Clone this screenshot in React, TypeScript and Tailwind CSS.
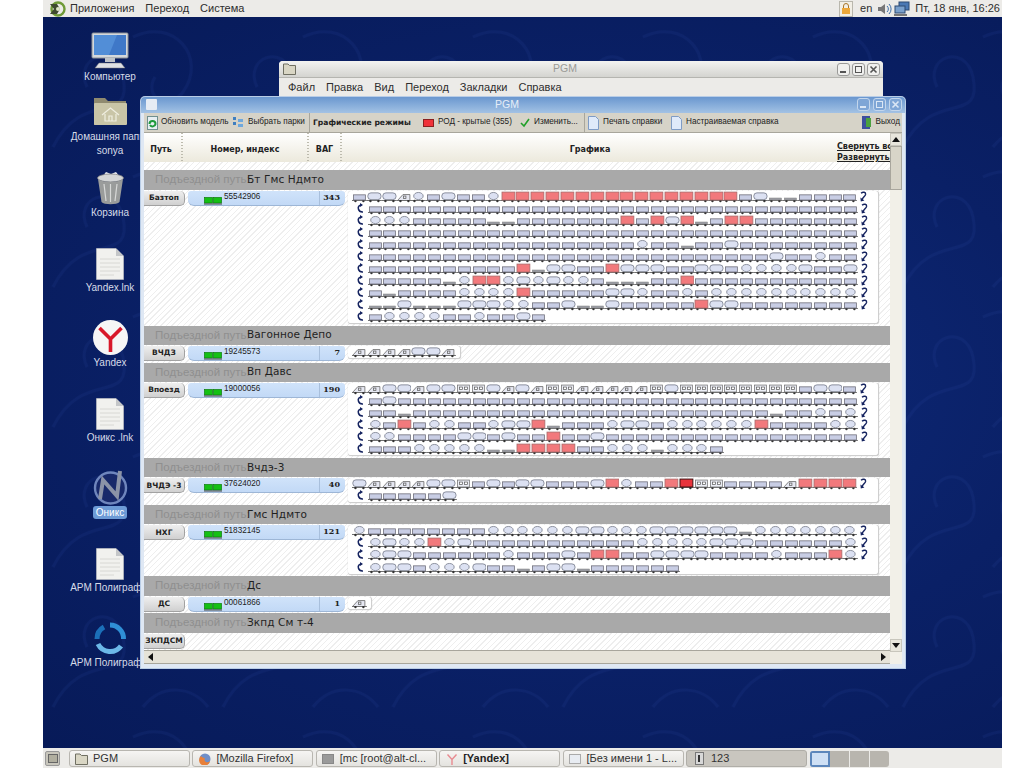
import React from "react";

const b = (n: number) => "b".repeat(n);
const c = (n: number) => "c".repeat(n);
const r = (n: number) => "r".repeat(n);

const G1 = [
  "bootcbobbc" + r(16) + "boffbbbb",
  b(33),
  "ccc" + b(5) + "ff" + b(7) + "rbrorfbrr" + b(7),
  b(33),
  b(18) + "cbbfbbo" + b(8),
  b(27) + "obbcbb",
  b(10) + "rfoobbrooobboobccccobbo",
  b(5) + "fcrrcococc" + "bfffbbr" + b(11),
  "bf" + b(4) + "ccccr" + b(5) + "oocbbcb" + c(10),
  "ffofffooocc" + "bboffo" + b(5) + "roo" + b(8),
  "bccccbbcbbob",
];
const G2 = ["ttttoot"];
const G3 = [
  "ttootoodd" + "otot" + "ddttttt" + "do" + "dddddddd" + "boob",
  "bo" + b(31),
  "bbf" + b(24) + "fbbcbc",
  "cbrbccbbcoorfbbbcoobccccccrbbbbcc",
  "ccbbbboobobbrbbo" + b(17),
  "bbbcccccffrrrrbbcccfcccb",
];
const G4 = ["ottttoodboboobbbo" + "rcbbrRddbbbbtrrrr", b(5) + "o"];
const G5 = [
  "c" + b(8) + c(6) + "ooccc" + "oooooo" + "f" + c(7),
  "cocc" + "rco" + b(11) + c(5) + "ooo" + b(6) + "c",
  "coo" + b(6) + "cbbbobrrbboooo" + b(4) + "cbbbrc",
  "coobcccobbfboofbbbbbb",
];

function Wagon({ t }: { t: string }) {
  return (
    <svg width="14.87" height="12.05" viewBox="0 0 15 12" className="shrink-0 block">
      <line x1="0" y1="9.5" x2="15" y2="9.5" stroke="#5c5c5c" strokeWidth="0.9" />
      <circle cx="3.5" cy="10" r="1.2" fill="#333" />
      <circle cx="11.5" cy="10" r="1.2" fill="#333" />
      {t === "b" && <rect x="1.5" y="3.8" width="12" height="5.2" fill="#c8cde4" stroke="#6e6e7a" strokeWidth="0.8" />}
      {t === "r" && <rect x="1" y="1" width="13" height="8" fill="#f2797c" stroke="#a86a6a" strokeWidth="0.8" />}
      {t === "R" && <rect x="1" y="1" width="13" height="8" fill="#e8343c" stroke="#3c1010" strokeWidth="1" />}
      {t === "o" && <rect x="0.8" y="1.8" width="13.4" height="6.8" rx="3.2" fill="#dce1f2" stroke="#737888" strokeWidth="0.8" />}
      {t === "c" && <ellipse cx="7.5" cy="5" rx="4.8" ry="3.6" fill="#dce1f2" stroke="#737888" strokeWidth="0.8" />}
      {t === "f" && <rect x="1.5" y="7" width="12" height="2" fill="#a0a2aa" stroke="#777" strokeWidth="0.5" />}
      {t === "t" && (
        <g fill="none" stroke="#666" strokeWidth="0.8">
          <path d="M1 9 L6 3.5 H13 V9" fill="#e6e8f2" />
          <rect x="6.5" y="5" width="2.5" height="2.5" />
        </g>
      )}
      {t === "d" && (
        <g>
          <rect x="1.5" y="2" width="12" height="7" fill="#eceef6" stroke="#777" strokeWidth="0.8" />
          <rect x="3.5" y="4" width="3" height="2.5" fill="#fff" stroke="#555" strokeWidth="0.7" />
          <rect x="8.5" y="4" width="3" height="2.5" fill="#fff" stroke="#555" strokeWidth="0.7" />
        </g>
      )}
    </svg>
  );
}

function ArrowIn() {
  return (
    <svg width="7" height="11" viewBox="0 0 7 11" className="block">
      <path d="M4.5 2 C2 2 0.8 4 1.4 6 C2 8.2 3.8 9.2 6 9" fill="none" stroke="#15235f" strokeWidth="1.5" />
      <path d="M3 0 L6 2 L3 4 Z" fill="#15235f" />
    </svg>
  );
}

function ArrowOut() {
  return (
    <svg width="7" height="11" viewBox="0 0 7 11" className="block">
      <path d="M1 2.2 C3 0.6 6 1 5.6 3.4 C5.2 5.4 2.6 6.4 2 9" fill="none" stroke="#15235f" strokeWidth="1.4" />
      <path d="M0.4 6.6 L0.8 10.6 L4.4 9.4 Z" fill="#15235f" />
    </svg>
  );
}

function Track({ rows, narrow }: { rows: string[]; narrow?: boolean }) {
  return (
    <div className={narrow ? "rounded-[3px] border-b border-r border-[#cfcfcf] bg-white pl-[4px] pr-[4px] shadow-[0_0_1px_#bbb]" : "rounded-[3px] border-b border-r border-[#cfcfcf] bg-white pl-[4px] pr-[12px] shadow-[0_0_1px_#bbb]"}>
      {rows.map((row, i) => (
        <div key={i} className="flex h-[12.05px] items-start">
          {i > 0 && (
            <div className="w-[15.5px] shrink-0 pl-[5px]">
              <ArrowIn />
            </div>
          )}
          {row.split("").map((t, j) => (
            <Wagon key={j} t={t} />
          ))}
          {i < rows.length - 1 && (
            <div className="ml-[3px] shrink-0">
              <ArrowOut />
            </div>
          )}
        </div>
      ))}
    </div>
  );
}

function Loco() {
  return (
    <svg width="18" height="8" viewBox="0 0 18 8" className="block">
      <rect x="0.5" y="0.5" width="8" height="5.5" fill="#14c014" stroke="#0b7d0b" strokeWidth="0.7" />
      <rect x="9.5" y="0.5" width="8" height="5.5" fill="#14c014" stroke="#0b7d0b" strokeWidth="0.7" />
      <line x1="0" y1="7" x2="18" y2="7" stroke="#444" strokeWidth="1" />
    </svg>
  );
}

function Group({
  name,
  label,
  num,
  count,
  rows,
  narrow,
}: {
  name: string;
  label: string;
  num?: string;
  count?: string;
  rows?: string[];
  narrow?: boolean;
}) {
  return (
    <div className="pb-[1.5px]">
      <div className="flex h-[19.5px] items-center bg-[#a9a9a9] pl-[11px]">
        <span className="w-[92px] shrink-0 whitespace-nowrap text-[11.5px] text-[#8f8f8f]">Подъездной путь:</span>
        <span className="whitespace-nowrap text-[10.5px] tracking-[0.1px] text-[#1f1f1f] [font-family:'DejaVu_Sans',sans-serif]">{name}</span>
      </div>
      <div className="flex items-start pt-[1px]">
        <div className="flex h-[15px] w-[41px] shrink-0 items-center justify-center rounded-r-[5px] border-b border-r border-[#a2a2a2] bg-gradient-to-b from-[#efefef] to-[#d0d0d0] text-[7.5px] font-bold text-[#222] [font-family:'DejaVu_Sans',sans-serif] whitespace-nowrap">
          {label}
        </div>
        {num && (
          <div className="ml-[3px] flex h-[15px] w-[157px] shrink-0 rounded-b-[6px] rounded-t-[3px] border-b border-[#9db6d6] bg-gradient-to-b from-[#d0e3fa] to-[#c2d9f6]">
            <div className="flex w-[132px] border-r border-[#a8bfdc] pl-[16px]">
              <div className="pt-[6px]">
                <Loco />
              </div>
              <span className="ml-[2px] pt-[1px] text-[8.2px] leading-[10px] text-[#222]">{num}</span>
            </div>
            <div className="flex-1 pr-[5px] pt-[1px] text-right text-[8px] font-bold leading-[11px] text-[#222] [font-family:'DejaVu_Serif',serif]">{count}</div>
          </div>
        )}
        {rows && (
          <div className={narrow ? "ml-[3px] shrink-0" : "ml-[3px] w-[531px] shrink-0"}>
            <Track rows={rows} narrow={narrow} />
          </div>
        )}
      </div>
    </div>
  );
}

function DocIcon() {
  return (
    <svg width="28" height="32" viewBox="0 0 28 32">
      <path d="M0.5 0.5 H20 L27.5 8 V31.5 H0.5 Z" fill="#f1f1ee" stroke="#c9c9c9" strokeWidth="0.6" />
      <path d="M20 0.5 V8 H27.5 Z" fill="#c4c6c8" />
      <g stroke="#d8d8d4" strokeWidth="1">
        <line x1="4" y1="11" x2="24" y2="11" />
        <line x1="4" y1="15" x2="24" y2="15" />
        <line x1="4" y1="19" x2="24" y2="19" />
        <line x1="4" y1="23" x2="24" y2="23" />
        <line x1="4" y1="27" x2="18" y2="27" />
      </g>
    </svg>
  );
}

const desktopIcons: { key: string; label: string[]; icon: React.ReactNode; lift?: boolean; sel?: boolean; short?: boolean }[] = [
  {
    key: "pc",
    label: ["Компьютер"],
    short: true,
    icon: (
      <svg width="38" height="37" viewBox="0 0 38 37">
        <rect x="1" y="1" width="36" height="25" rx="1" fill="#d4d8dc" stroke="#8b9096" />
        <rect x="3" y="3" width="32" height="20" fill="#3f78c8" />
        <path d="M3 3 H26 L18 23 H3 Z" fill="#5b97dd" opacity="0.7" />
        <rect x="14" y="26" width="10" height="4" fill="#bfc3c8" />
        <path d="M4 36 L8 31 H30 L34 36 Z" fill="#dfe1e4" stroke="#777" strokeWidth="0.5" />
      </svg>
    ),
  },
  {
    key: "home",
    label: ["Домашняя папка", "sonya"],
    lift: true,
    short: true,
    icon: (
      <svg width="33" height="30" viewBox="0 0 33 30">
        <path d="M0 2 H11 L14 5 H32 V29 H0 Z" fill="#8f8a6f" />
        <rect x="0" y="7" width="33" height="22" rx="1" fill="#c9c5a7" />
        <path d="M8 19 L16.5 12 L25 19 M11 18 V25 H22 V18 M15 25 V20 H18 V25" fill="none" stroke="#efeee0" strokeWidth="1.2" />
      </svg>
    ),
  },
  {
    key: "trash",
    label: ["Корзина"],
    icon: (
      <svg width="29" height="34" viewBox="0 0 29 34">
        <path d="M6 6 L10 1 L15 3 L20 1 L24 6 Z" fill="#eef1f4" />
        <ellipse cx="14.5" cy="7" rx="13" ry="4" fill="#d4d6d6" stroke="#777" strokeWidth="0.7" />
        <path d="M2 8 L5.5 31 C8 34 21 34 23.5 31 L27 8 C22 12 7 12 2 8 Z" fill="#9a9c9b" />
        <g stroke="#d8d9d8" strokeWidth="1.2">
          <line x1="8" y1="13" x2="10" y2="30" />
          <line x1="14.5" y1="13" x2="14.5" y2="31" />
          <line x1="21" y1="13" x2="19" y2="30" />
        </g>
      </svg>
    ),
  },
  { key: "ylnk", label: ["Yandex.lnk"], icon: <DocIcon /> },
  {
    key: "y",
    label: ["Yandex"],
    icon: (
      <svg width="35" height="35" viewBox="0 0 35 35">
        <circle cx="17.5" cy="17.5" r="17.5" fill="#f6f6f6" />
        <path d="M6.5 8 L17.5 19 L28.5 8 M17.5 19 V32" fill="none" stroke="#d8182a" strokeWidth="3.6" />
      </svg>
    ),
  },
  { key: "olnk", label: ["Оникс .lnk"], icon: <DocIcon /> },
  {
    key: "on",
    label: ["Оникс"],
    sel: true,
    icon: (
      <svg width="35" height="36" viewBox="0 0 35 36">
        <circle cx="17.5" cy="19" r="15.5" fill="#18296a" stroke="#6f86bd" strokeWidth="2.4" />
        <path d="M7 30 L10 11 L24 27 L27 2" fill="none" stroke="#8b93a7" strokeWidth="4" />
      </svg>
    ),
  },
  { key: "alnk", label: ["АРМ Полиграф..."], icon: <DocIcon /> },
  {
    key: "arm",
    label: ["АРМ Полиграф..."],
    icon: (
      <svg width="33" height="33" viewBox="0 0 33 33">
        <path d="M16 3 A13.5 13.5 0 0 1 29.5 17" fill="none" stroke="#2f8fd6" strokeWidth="5" />
        <path d="M27 24 A13.5 13.5 0 0 1 4 22" fill="none" stroke="#6cb8e8" strokeWidth="5" />
        <path d="M3 17 A13.5 13.5 0 0 1 10 5" fill="none" stroke="#1b6fb8" strokeWidth="5" />
      </svg>
    ),
  },
];

function WinBtn({ kind, blue }: { kind: "min" | "max" | "x"; blue?: boolean }) {
  const stroke = blue ? "#dbe7f5" : "#555";
  return (
    <svg width="13" height="13" viewBox="0 0 13 13" className="block">
      <rect x="0.5" y="0.5" width="12" height="12" rx="2.5" fill={blue ? "#7fa6d6" : "#f0f0ee"} stroke={blue ? "#c3d6ec" : "#9a9a98"} />
      {kind === "min" && <rect x="3" y="8" width="6" height="2" fill={stroke} />}
      {kind === "max" && <rect x="3.5" y="3.5" width="6" height="6" fill="none" stroke={stroke} />}
      {kind === "x" && <path d="M3.5 3.5 L9.5 9.5 M9.5 3.5 L3.5 9.5" stroke={stroke} strokeWidth="1.6" />}
    </svg>
  );
}

function Folder() {
  return (
    <svg width="13" height="12" viewBox="0 0 13 12" className="block shrink-0">
      <path d="M0.5 1 H5 L6.5 2.5 H12.5 V11.5 H0.5 Z" fill="#d9d6c4" stroke="#6f6f62" />
    </svg>
  );
}

function Paper() {
  return (
    <svg width="11" height="14" viewBox="0 0 11 14" className="block shrink-0">
      <path d="M0.5 0.5 H7.5 L10.5 3.5 V13.5 H0.5 Z" fill="#dfeafa" stroke="#7f9cc6" />
    </svg>
  );
}

function Dots() {
  return <div className="h-[28px] w-[2px] shrink-0 self-end bg-[repeating-linear-gradient(180deg,#bdbbae_0px,#bdbbae_1px,transparent_1px,transparent_3px)]" />;
}

function TaskBtn({ icon, text, bold, active }: { icon: React.ReactNode; text: string; bold?: boolean; active?: boolean }) {
  return (
    <div
      className={
        active
          ? "flex h-[17px] w-[121px] shrink-0 items-center gap-[5px] rounded-[3px] border border-[#b0aea8] bg-[#c9c6bf] pl-[6px]"
          : "flex h-[17px] w-[121px] shrink-0 items-center gap-[5px] rounded-[3px] border border-[#b8b6b0] bg-gradient-to-b from-[#f6f5f3] to-[#e4e3df] pl-[5px]"
      }
    >
      <div className="flex w-[13px] shrink-0 justify-center">{icon}</div>
      <span className={bold ? "whitespace-nowrap font-bold text-[#222]" : "whitespace-nowrap text-[#333]"}>{text}</span>
    </div>
  );
}

function Wallpaper() {
  return (
    <svg className="absolute inset-0 h-full w-full" aria-hidden="true">
      <defs>
        <pattern id="orn" width="170" height="140" patternUnits="userSpaceOnUse">
          <g fill="none" stroke="#2a4aa6" strokeWidth="3" opacity="0.13">
            <path d="M10 130 C40 70 90 110 80 60 C72 25 30 40 44 70" />
            <path d="M90 20 C130 0 165 40 140 75 C125 95 100 80 112 60" />
            <path d="M100 130 C120 105 150 110 165 130" />
          </g>
        </pattern>
      </defs>
      <rect width="100%" height="100%" fill="url(#orn)" />
    </svg>
  );
}

export default function App() {
  return (
    <div className="flex h-[768px] w-[1024px] overflow-hidden bg-white [font-family:'Liberation_Sans',sans-serif]">
      <div className="ml-[43px] flex w-[959px] flex-col">
        {/* top panel */}
        <div className="flex h-[17px] shrink-0 items-center bg-[#ecebe8] text-[11px] text-[#2e2e2e]">
          <svg width="18" height="16" viewBox="0 0 18 16" className="ml-[6px] block">
            <circle cx="9" cy="8" r="6.5" fill="none" stroke="#6f9a38" strokeWidth="2.4" />
            <path d="M1 3 H8 L11 8 L8 13 H1 L5 8 Z" fill="#3f4a30" />
            <circle cx="9" cy="8" r="2" fill="#dfe8c8" />
          </svg>
          <span className="ml-[3px]">Приложения</span>
          <span className="ml-[11px]">Переход</span>
          <span className="ml-[11px]">Система</span>
          <div className="flex-1" />
          <svg width="14" height="16" viewBox="0 0 14 16" className="block">
            <rect x="0.5" y="0.5" width="13" height="15" fill="#f2efe6" stroke="#b9b7ad" />
            <rect x="3" y="7" width="8" height="6" fill="#eda83a" />
            <path d="M4.5 7 V5 A2.5 2.5 0 0 1 9.5 5 V7" fill="none" stroke="#a9762a" />
          </svg>
          <span className="ml-[7px]">en</span>
          <svg width="16" height="14" viewBox="0 0 16 14" className="ml-[5px] block">
            <path d="M1 5 H4 L8 2 V12 L4 9 H1 Z" fill="#777" />
            <path d="M10 4 A4 4 0 0 1 10 10 M12 2 A7 7 0 0 1 12 12" fill="none" stroke="#3f6fa8" />
          </svg>
          <svg width="16" height="16" viewBox="0 0 16 16" className="ml-[1px] block">
            <rect x="5" y="1" width="10" height="8" fill="#4a78b4" stroke="#2d4a72" />
            <rect x="1" y="5" width="10" height="7" fill="#7aa0cc" stroke="#2d4a72" />
            <rect x="0" y="13" width="13" height="2" fill="#777" />
          </svg>
          <span className="ml-[5px] mr-[2px] whitespace-nowrap">Пт, 18 янв, 16:26</span>
        </div>

        {/* desktop */}
        <div className="relative flex-1 overflow-hidden bg-[#0a2066] bg-[radial-gradient(ellipse_at_60%_50%,#0e2b7c_0%,#0a2066_55%,#071a58_100%)]">
          <Wallpaper />
          <div className="relative flex w-[134px] flex-col">
            {desktopIcons.map((d) => (
              <div
                key={d.key}
                className={
                  d.lift
                    ? "flex h-[68px] flex-col items-center pt-[11px]"
                    : d.short
                      ? "flex h-[68px] flex-col items-center pt-[13px]"
                      : "flex h-[75px] flex-col items-center pt-[13px]"
                }
              >
                <div className={d.lift ? "flex h-[30px] items-end" : "flex h-[39px] items-end"}>{d.icon}</div>
                {d.label.map((l, i) => (
                  <div
                    key={i}
                    className={
                      d.sel
                        ? "mt-[1px] rounded-[3px] bg-[#6d9bd6] px-[3px] text-[10px] font-normal leading-[13px] text-white"
                        : i === 0 && d.lift
                          ? "mt-[4px] whitespace-nowrap text-[10px] leading-[13px] text-[#d6dbe8]"
                          : "mt-[1px] whitespace-nowrap text-[10px] leading-[13px] text-[#d6dbe8]"
                    }
                  >
                    {l}
                  </div>
                ))}
              </div>
            ))}
          </div>

          {/* back window */}
          <div className="absolute left-[236px] top-[44px] h-[300px] w-[604px] rounded-t-[4px] bg-[#ecebe8]">
            <div className="relative flex h-[17px] items-center justify-center rounded-t-[4px] border-b border-[#b5b5b0] bg-gradient-to-b from-[#f3f3f1] to-[#d4d4d0] pr-[32px]">
              <div className="absolute left-[4px] top-[2px]">
                <Folder />
              </div>
              <span className="text-[10.5px] text-[#9a9a96]">PGM</span>
              <div className="absolute right-[3px] top-[2px] flex gap-[2px]">
                <WinBtn kind="min" />
                <WinBtn kind="max" />
                <WinBtn kind="x" />
              </div>
            </div>
            <div className="flex h-[19px] items-center gap-[11px] pl-[9px] text-[11px] text-[#2e2e2e]">
              <span>Файл</span>
              <span>Правка</span>
              <span>Вид</span>
              <span>Переход</span>
              <span>Закладки</span>
              <span>Справка</span>
            </div>
          </div>

          {/* front window */}
          <div className="absolute left-[98px] top-[80px] flex h-[571px] w-[764px] flex-col overflow-hidden rounded-t-[4px] bg-[#dfe8f4] px-[3px] pb-[4px] text-[#222] shadow-[0_0_0_1px_#b9cde6]">
            <div className="relative -mx-[3px] flex h-[16px] shrink-0 items-center justify-center bg-gradient-to-b from-[#6a97cf] to-[#a3c2e4] pr-[32px]">
              <div className="absolute left-[5px] top-[2px] h-[11px] w-[11px] rounded-[1px] bg-[#e6ecf4]" />
              <span className="text-[10.5px] text-[#e6eef8]">PGM</span>
              <div className="absolute right-[3px] top-[1px] flex gap-[3px]">
                <WinBtn kind="min" blue />
                <WinBtn kind="max" blue />
                <WinBtn kind="x" blue />
              </div>
            </div>

            {/* toolbar */}
            <div className="flex h-[20px] shrink-0 items-center border-b border-[#a8a69c] bg-[#d6d3c8] text-[8.2px] text-[#222]">
              <svg width="11" height="14" viewBox="0 0 11 14" className="ml-[3px] block shrink-0">
                <rect x="0.5" y="0.5" width="10" height="13" fill="#e6eef2" stroke="#6f8f8f" />
                <path d="M2.5 8 A3 3 0 1 1 8.5 8 A3 3 0 0 1 3 9" fill="none" stroke="#1d9a3a" strokeWidth="2" />
              </svg>
              <span className="ml-[3px] w-[70px] shrink-0 whitespace-nowrap">Обновить модель</span>
              <svg width="10" height="13" viewBox="0 0 10 13" className="ml-[2px] block shrink-0">
                <rect x="0" y="1" width="3" height="3" fill="#3f7fc0" />
                <rect x="5" y="3" width="5" height="3" fill="#6fa8dc" />
                <rect x="0" y="6" width="3" height="3" fill="#3f7fc0" />
                <rect x="5" y="8" width="5" height="3" fill="#6fa8dc" />
              </svg>
              <span className="ml-[5px] w-[61px] shrink-0 whitespace-nowrap">Выбрать парки</span>
              <div className="h-[19px] w-px shrink-0 bg-[#a8a69c]" />
              <span className="ml-[3px] w-[110px] shrink-0 whitespace-nowrap font-bold [font-family:'DejaVu_Sans',sans-serif] text-[7.6px]">Графические режимы</span>
              <div className="h-[8px] w-[11px] shrink-0 border border-[#8a2020] bg-[#f0323a]" />
              <span className="ml-[4px] w-[78px] shrink-0 whitespace-nowrap">РОД - крытые (355)</span>
              <svg width="10" height="10" viewBox="0 0 10 10" className="ml-[4px] block shrink-0">
                <path d="M1 5 L4 8 L9 1" fill="none" stroke="#22a02a" strokeWidth="1.6" />
              </svg>
              <span className="ml-[4px] w-[47px] shrink-0 whitespace-nowrap">Изменить...</span>
              <div className="ml-[3px] h-[19px] w-px shrink-0 bg-[#a8a69c]" />
              <div className="ml-[3px] shrink-0">
                <Paper />
              </div>
              <span className="ml-[4px] w-[64px] shrink-0 whitespace-nowrap">Печать справки</span>
              <div className="ml-[4px] shrink-0">
                <Paper />
              </div>
              <span className="ml-[4px] whitespace-nowrap">Настраиваемая справка</span>
              <div className="flex-1" />
              <svg width="11" height="15" viewBox="0 0 11 15" className="block shrink-0">
                <rect x="1" y="1" width="8" height="13" fill="#3d4f9e" />
                <rect x="5" y="3" width="5" height="9" fill="#4aa03f" />
              </svg>
              <span className="ml-[4px] mr-[2px] whitespace-nowrap">Выход</span>
            </div>

            <div className="flex min-h-0 flex-1">
              <div className="flex w-[746px] shrink-0 flex-col">
                {/* header */}
                <div className="relative flex h-[29px] shrink-0 items-end bg-gradient-to-b from-[#ffffff] to-[#ece9dc] pb-[1px] text-[8px] font-bold [font-family:'DejaVu_Sans',sans-serif]">
                  <div className="flex w-[37px] shrink-0 items-center justify-center self-center pr-[3px] pt-[6px]">Путь</div>
                  <Dots />
                  <div className="flex w-[124px] shrink-0 items-center justify-center self-center pt-[6px]">Номер, индекс</div>
                  <Dots />
                  <div className="flex w-[31px] shrink-0 items-center justify-center self-center pt-[6px]">ВАГ</div>
                  <Dots />
                  <div className="flex w-[496px] shrink-0 items-center justify-center self-center pt-[6px]">Графика</div>
                  <div className="absolute left-[693px] top-[8px] w-[53px] overflow-hidden text-[8px] leading-[11px] underline whitespace-nowrap">
                    <div>Свернуть все</div>
                    <div>Развернуть все</div>
                  </div>
                </div>
                {/* content */}
                <div className="min-h-0 flex-1 overflow-hidden bg-[repeating-linear-gradient(135deg,#ffffff_0px,#ffffff_3px,#eeeeee_3px,#eeeeee_4px)] pt-[8px]">
                  <Group name="Бт Гмс Ндмто" label="Базтоп" num="55542906" count="343" rows={G1} />
                  <Group name="Вагонное Депо" label="ВЧДЗ" num="19245573" count="7" rows={G2} narrow />
                  <Group name="Вп Давс" label="Впоезд" num="19000056" count="190" rows={G3} />
                  <Group name="Вчдэ-3" label="ВЧДЭ -3" num="37624020" count="40" rows={G4} />
                  <Group name="Гмс Ндмто" label="НХГ" num="51832145" count="121" rows={G5} />
                  <Group name="Дс" label="ДС" num="00061866" count="1" rows={["t"]} narrow />
                  <Group name="Зкпд См т-4" label="ЗКПДСМ" />
                </div>
                {/* horizontal scroll */}
                <div className="flex h-[14px] shrink-0 items-center justify-between border-y border-[#a8a69c] bg-[#e6e3d8] px-[3px]">
                  <svg width="7" height="8" viewBox="0 0 7 8"><path d="M6 0 L1 4 L6 8 Z" fill="#111" /></svg>
                  <svg width="7" height="8" viewBox="0 0 7 8"><path d="M1 0 L6 4 L1 8 Z" fill="#111" /></svg>
                </div>
              </div>
              {/* vertical scroll */}
              <div className="flex w-[12px] shrink-0 flex-col bg-[#f2f0e8]">
                <div className="flex h-[13px] shrink-0 items-center justify-center border border-[#c8c6bc] bg-[#e8e6dc]">
                  <svg width="8" height="5" viewBox="0 0 8 5"><path d="M0 5 L4 0 L8 5 Z" fill="#111" /></svg>
                </div>
                <div className="h-[44px] shrink-0 border border-[#a8a69c] bg-[#d8d5c8]" />
                <div className="flex-1" />
                <div className="mb-[12px] flex h-[13px] shrink-0 items-center justify-center border border-[#c8c6bc] bg-[#e8e6dc]">
                  <svg width="8" height="5" viewBox="0 0 8 5"><path d="M0 0 L4 5 L8 0 Z" fill="#111" /></svg>
                </div>
              </div>
            </div>
          </div>
        </div>

        {/* bottom panel */}
        <div className="flex h-[20px] shrink-0 items-center bg-[#ecebe8] pt-[1px] text-[11px]">
          <div className="ml-[2px] flex h-[15px] w-[15px] items-center justify-center rounded-[2px] border border-[#999] bg-[#c8c6bc]">
            <div className="h-[9px] w-[10px] border border-[#666] bg-[#b0ae9f]" />
          </div>
          <div className="ml-[9px] flex gap-[2.4px]">
            <TaskBtn icon={<Folder />} text="PGM" />
            <TaskBtn
              icon={
                <svg width="12" height="12" viewBox="0 0 12 12" className="block">
                  <circle cx="6" cy="6" r="5.5" fill="#6f8fc8" />
                  <path d="M2 3 A5.5 5.5 0 1 0 11 8 C8 11 4 8 6 5 C4 5 3 4 2 3 Z" fill="#e8803a" />
                </svg>
              }
              text="[Mozilla Firefox]"
            />
            <TaskBtn icon={<div className="h-[10px] w-[12px] border border-[#888] bg-[#9a9a9a]" />} text="[mc [root@alt-cl..." />
            <TaskBtn
              icon={
                <svg width="12" height="12" viewBox="0 0 12 12" className="block">
                  <path d="M1.5 1.5 L6 6.5 L10.5 1.5 M6 6.5 V12" fill="none" stroke="#e88a90" strokeWidth="1.4" />
                </svg>
              }
              text="[Yandex]"
              bold
            />
            <TaskBtn icon={<div className="h-[10px] w-[12px] border border-[#aaa] bg-[#e8ecf2]" />} text="[Без имени 1 - L..." />
            <TaskBtn
              active
              icon={
                <svg width="9" height="13" viewBox="0 0 9 13" className="block">
                  <rect x="0.5" y="0.5" width="8" height="12" fill="#d8d8d8" stroke="#777" />
                  <rect x="3" y="3" width="2" height="7" fill="#333" />
                </svg>
              }
              text="123"
            />
          </div>
          <div className="ml-[3.5px] flex h-[16px] w-[79px] overflow-hidden rounded-[3px] bg-[#b8b5ae]">
            <div className="h-full w-[20px] border-2 border-[#5d87bb] bg-[#cfe0f4]" />
            <div className="w-[20px] border-r border-[#ecebe8]" />
            <div className="w-[20px] border-r border-[#ecebe8]" />
          </div>
        </div>
      </div>
    </div>
  );
}
